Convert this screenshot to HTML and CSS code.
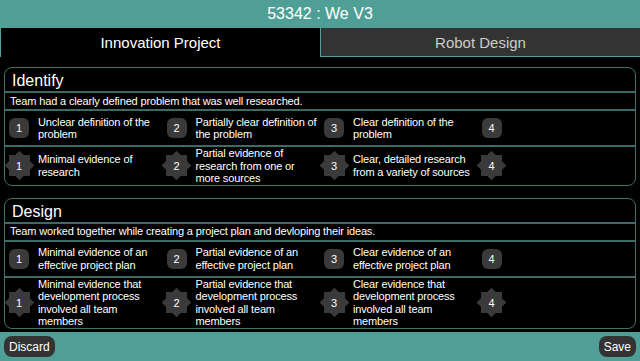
FILE: index.html
```html
<!DOCTYPE html>
<html lang="en">

<head>
    <meta charset="UTF-8">
    <meta name="viewport" content="width=device-width, initial-scale=1.0">
    <title>53342 : We V3</title>
    <link rel="stylesheet" href="styles.css">
</head>

<body>
    <header class="top-bar">53342 : We V3</header>

    <nav class="tabs">
        <div class="tab tab-active">Innovation Project</div>
        <div class="tab">Robot Design</div>
    </nav>

    <main class="rubric">
        <!-- Identify -->
        <section class="card">
            <h2 class="card-title">Identify</h2>
            <p class="card-desc">Team had a clearly defined problem that was well researched.</p>
            <div class="level-row">
                <div class="level"><span class="badge">1</span><span class="level-text">Unclear definition of the problem</span></div>
                <div class="level"><span class="badge">2</span><span class="level-text">Partially clear definition of the problem</span></div>
                <div class="level"><span class="badge">3</span><span class="level-text">Clear definition of the problem</span></div>
                <div class="level"><span class="badge">4</span><span class="level-text"></span></div>
            </div>
            <div class="level-row">
                <div class="level"><span class="badge star">1</span><span class="level-text">Minimal evidence of research</span></div>
                <div class="level"><span class="badge star">2</span><span class="level-text">Partial evidence of research from one or more sources</span></div>
                <div class="level"><span class="badge star">3</span><span class="level-text">Clear, detailed research from a variety of sources</span></div>
                <div class="level"><span class="badge star">4</span><span class="level-text"></span></div>
            </div>
        </section>

        <!-- Design -->
        <section class="card">
            <h2 class="card-title">Design</h2>
            <p class="card-desc">Team worked together while creating a project plan and devloping their ideas.</p>
            <div class="level-row">
                <div class="level"><span class="badge">1</span><span class="level-text">Minimal evidence of an effective project plan</span></div>
                <div class="level"><span class="badge">2</span><span class="level-text">Partial evidence of an effective project plan</span></div>
                <div class="level"><span class="badge">3</span><span class="level-text">Clear evidence of an effective project plan</span></div>
                <div class="level"><span class="badge">4</span><span class="level-text"></span></div>
            </div>
            <div class="level-row">
                <div class="level"><span class="badge star">1</span><span class="level-text">Minimal evidence that development process involved all team members</span></div>
                <div class="level"><span class="badge star">2</span><span class="level-text">Partial evidence that development process involved all team members</span></div>
                <div class="level"><span class="badge star">3</span><span class="level-text">Clear evidence that development process involved all team members</span></div>
                <div class="level"><span class="badge star">4</span><span class="level-text"></span></div>
            </div>
        </section>
    </main>

    <footer class="bottom-bar">
        <button type="button" class="btn">Discard</button>
        <button type="button" class="btn">Save</button>
    </footer>
</body>

</html>
```

FILE: styles.css
```css
* {
    box-sizing: border-box;
}

body {
    margin: 0;
    height: 361px;
    display: flex;
    flex-direction: column;
    overflow: hidden;
    background-color: #4f9f96;
    color: #fff;
    font-family: "Liberation Sans", Arial, sans-serif;
}

.top-bar {
    height: 28px;
    line-height: 28px;
    text-align: center;
    font-size: 16px;
}

.tabs {
    display: grid;
    grid-template-columns: 320px 1fr;
    height: 29px;
}

.tab {
    display: flex;
    align-items: center;
    justify-content: center;
    font-size: 15px;
    background-color: #333;
    color: #ccc;
    border-left: 1px solid #4f9f96;
    border-bottom: 1px solid #4f9f96;
}

.tab.tab-active {
    background-color: #000;
    color: #fff;
    border-bottom: none;
}

.rubric {
    flex: 1;
    overflow: hidden;
    background-color: #000;
    padding: 10px 4px 0;
    display: flex;
    flex-direction: column;
    gap: 12px;
}

.card {
    flex: none;
    border: 1.5px solid #41716b;
    border-radius: 8px;
}

.card-title {
    margin: 0;
    padding: 3px 7px 1px;
    font-size: 16px;
    font-weight: normal;
    line-height: 19px;
    border-bottom: 2px solid #3e6a65;
}

.card-desc {
    margin: 0;
    padding: 1.5px 5px;
    font-size: 11px;
    line-height: 13px;
    letter-spacing: -0.15px;
    border-bottom: 2px solid #3e6a65;
}

.level-row {
    display: grid;
    grid-template-columns: repeat(4, 1fr);
}

.level-row + .level-row {
    border-top: 2px solid #3e6a65;
}

.level-row:first-of-type {
    min-height: 34px;
}

.level {
    display: flex;
    align-items: center;
    gap: 9px;
    padding-left: 4px;
    min-height: 30px;
}

.level-text {
    width: 124px;
    font-size: 11px;
    line-height: 12.5px;
    letter-spacing: -0.15px;
}

.badge {
    position: relative;
    flex: none;
    width: 20px;
    height: 20px;
    display: flex;
    align-items: center;
    justify-content: center;
    border-radius: 6px;
    background-color: #3a3a3a;
    font-size: 11px;
    z-index: 0;
}

/* 8각 별 모양: 정사각형 두 개를 겹쳐서 만듭니다 */
.badge.star {
    border-radius: 0;
    background: none;
}

.badge.star::before,
.badge.star::after {
    content: "";
    position: absolute;
    left: -0.5px;
    top: -0.5px;
    width: 21px;
    height: 21px;
    background-color: #3a3a3a;
    z-index: -1;
}

.badge.star::after {
    transform: rotate(45deg);
}

.bottom-bar {
    height: 29px;
    display: flex;
    align-items: center;
    justify-content: space-between;
    padding: 0 4px;
}

.btn {
    height: 21px;
    padding: 0 5px;
    border: none;
    border-radius: 8px;
    background-color: #333;
    color: #fff;
    font-family: "Liberation Sans", Arial, sans-serif;
    font-size: 12px;
    cursor: pointer;
}
```
